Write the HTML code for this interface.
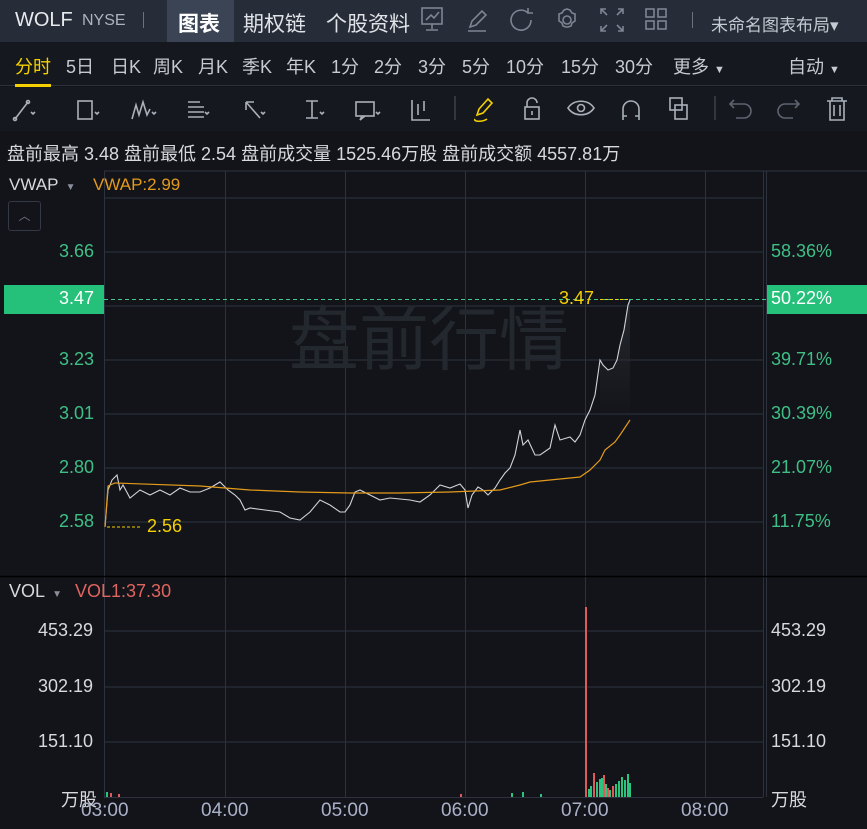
<!DOCTYPE html>
<html><head><meta charset="utf-8"><style>
*{margin:0;padding:0;box-sizing:border-box}
body{width:867px;height:829px;background:#121419;font-family:"Liberation Sans","Noto Sans CJK SC",sans-serif;overflow:hidden;position:relative;color:#d6d9de}
.a{position:absolute;white-space:nowrap}
#top{position:absolute;left:0;top:0;width:867px;height:42px;background:#262c38}
#row2{position:absolute;left:0;top:42px;width:867px;height:44px;background:#15181e;border-bottom:1px solid #2c313b}
#row3{position:absolute;left:0;top:87px;width:867px;height:44px;background:#15181e}
.t{font-size:18px;color:#c5cad3;top:53px}
</style></head><body>
<div id="top"></div>
<div class="a" style="left:15px;top:9px;font-size:20px;color:#e8eaee">WOLF</div>
<div class="a" style="left:82px;top:12px;font-size:16px;color:#aeb4be">NYSE</div>
<div class="a" style="left:143px;top:12px;width:1px;height:16px;background:#6b7280"></div>
<div class="a" style="left:167px;top:0;width:67px;height:42px;background:#3b4455"></div>
<div class="a" style="left:178px;top:8px;font-size:21px;font-weight:bold;color:#fff">图表</div>
<div class="a" style="left:243px;top:8px;font-size:21px;color:#e0e3e8">期权链</div>
<div class="a" style="left:326px;top:8px;font-size:21px;color:#e0e3e8">个股资料</div>
<svg class="a" style="left:0;top:0" width="700" height="42" fill="none" stroke="#7d8592" stroke-width="1.6">
<g transform="translate(421,7)"><rect x="1" y="1" width="20" height="16"/><path d="M11 17v5M5 23h12M5 13l5-5 3 3 5-6"/></g>
<g transform="translate(466,7)"><path d="M2 24h18M4 20l2-6 10-10 4 4-10 10z"/></g>
<g transform="translate(510,7)"><path d="M18 6a10 10 0 1 0 3 7M18 1v5h5"/></g>
<g transform="translate(555,7)"><circle cx="12" cy="13" r="4"/><path d="M12 2l3 1 2 3 3 1v7l-3 2-1 3-3 1h-2l-3-1-1-3-3-2V7l3-1 2-3z"/></g>
<g transform="translate(600,7)"><path d="M6 2H1v5M1 2l6 6M18 2h5v5M23 2l-6 6M6 24H1v-5M1 24l6-6M18 24h5v-5M23 24l-6-6"/></g>
<g transform="translate(645,7)"><rect x="1" y="2" width="8" height="8"/><rect x="13" y="2" width="8" height="8"/><rect x="1" y="14" width="8" height="8"/><rect x="13" y="14" width="8" height="8"/></g>
</svg>
<div class="a" style="left:692px;top:12px;width:1px;height:16px;background:#6b7280"></div>
<div class="a" style="left:711px;top:11px;font-size:17px;color:#c5cad3">未命名图表布局▾</div>

<div id="row2"></div>
<div class="a t" style="left:15px;color:#f5d000">分时</div>
<div class="a" style="left:15px;top:84px;width:36px;height:3px;background:#f5d000"></div>
<div class="a t" style="left:66px">5日</div>
<div class="a t" style="left:111px">日K</div>
<div class="a t" style="left:153px">周K</div>
<div class="a t" style="left:198px">月K</div>
<div class="a t" style="left:242px">季K</div>
<div class="a t" style="left:286px">年K</div>
<div class="a t" style="left:331px">1分</div>
<div class="a t" style="left:374px">2分</div>
<div class="a t" style="left:418px">3分</div>
<div class="a t" style="left:462px">5分</div>
<div class="a t" style="left:506px">10分</div>
<div class="a t" style="left:561px">15分</div>
<div class="a t" style="left:615px">30分</div>
<div class="a t" style="left:673px">更多 <span style="font-size:11px">▼</span></div>
<div class="a t" style="left:788px">自动 <span style="font-size:11px">▼</span></div>

<div id="row3"></div>
<svg class="a" style="left:0;top:87px" width="867" height="44" fill="none" stroke="#aab0ba" stroke-width="1.6">
<g transform="translate(12,8)"><path d="M3 24l13-17"/><circle cx="3" cy="24" r="1.5"/><circle cx="16" cy="7" r="1.5"/><path d="M19 17l2 2 2-2"/></g>
<g transform="translate(75,8)"><rect x="3" y="6" width="14" height="18"/><path d="M20 17l2 2 2-2"/></g>
<g transform="translate(130,8)"><path d="M2 24l4-14 3 10 4-13 4 13 3-6"/><path d="M22 17l2 2 2-2"/></g>
<g transform="translate(186,8)"><path d="M2 7h12M2 12h16M2 17h16M2 22h16"/><path d="M19 17l2 2 2-2"/></g>
<g transform="translate(243,8)"><path d="M3 7l14 16M3 7v8M3 7h8"/><path d="M18 17l2 2 2-2"/></g>
<g transform="translate(304,8)"><path d="M2 6h12M8 6v17M2 23h12"/><path d="M16 17l2 2 2-2"/></g>
<g transform="translate(354,8)"><rect x="2" y="7" width="18" height="14"/><path d="M8 21l-2 4 5-4"/><path d="M22 17l2 2 2-2"/></g>
<g transform="translate(410,8)"><path d="M2 5v20h18M8 9v11M14 6v10"/></g>
<path d="M455 96v24" stroke="#3a3f49" transform="translate(0,-87)"/>
<g transform="translate(473,8)" stroke="#f5d000"><path d="M2 24c-2 3 8 3 12 0M4 20l2-6 9-10 4 4-9 10z"/></g>
<g transform="translate(522,8)"><rect x="3" y="12" width="14" height="12"/><path d="M5 12v-4a5 5 0 0 1 10 0M10 16v4"/></g>
<g transform="translate(567,8)"><path d="M1 13c6-9 20-9 26 0-6 9-20 9-26 0z"/><circle cx="14" cy="13" r="3.5"/></g>
<g transform="translate(620,8)"><path d="M3 25v-11a8 8 0 0 1 16 0v11M3 21h4M15 21h4"/></g>
<g transform="translate(667,8)"><rect x="3" y="3" width="12" height="12"/><rect x="8" y="10" width="12" height="14"/></g>
<path d="M715 9v24" stroke="#3a3f49"/>
<g transform="translate(728,8)" stroke="#5d6470"><path d="M6 5l-4 4 4 4M2 9h14a7 7 0 0 1 0 14H8"/></g>
<g transform="translate(777,8)" stroke="#5d6470"><path d="M18 5l4 4-4 4M22 9H8a7 7 0 0 0 0 14h8"/></g>
<g transform="translate(825,8)"><path d="M2 6h20M7 6V3h10v3M5 6v19h14V6M9 10v11M15 10v11"/></g>
</svg>

<div class="a" style="left:0;top:131px;width:867px;height:40px;background:#121419"></div>
<div class="a" style="left:7px;top:140px;font-size:18px;color:#d6d9de">盘前最高 3.48 盘前最低 2.54 盘前成交量 1525.46万股 盘前成交额 4557.81万</div>

<svg class="a" style="left:0;top:0" width="867" height="829">
<defs><linearGradient id="gr" x1="0" y1="0" x2="0" y2="1"><stop offset="0" stop-color="#2a2d34" stop-opacity="0.8"/><stop offset="1" stop-color="#2a2d34" stop-opacity="0"/></linearGradient></defs>
<g stroke="#2d333e" stroke-width="1">
<path d="M104 171H867M104 198H763M104 252H763M104 306H763M104 360H763M104 414H763M104 468H763M104 522H763"/>
<path d="M104.5 171V797M225.5 171V797M345.5 171V797M465.5 171V797M585.5 171V797M705.5 171V797M763.5 171V797M766.5 171V797"/>
<path d="M104 631H763M104 687H763M104 742H763M104 797.5H763"/>
</g>
<path d="M0 576.5H867" stroke="#000" stroke-width="1.5"/>
<text x="289" y="364" font-size="70" fill="#23272e" font-family="Noto Sans CJK SC">盘前行情</text>
<path d="M104 299.5H867" stroke="#3fc98a" stroke-width="1" stroke-dasharray="4 3"/>
<rect x="4" y="285" width="100" height="29" fill="#25c07a"/>
<rect x="767" y="285" width="100" height="29" fill="#25c07a"/>
<path d="M600 360 L603 365 608 370 613 368 617 360 620 345 624 330 628 305 630 300 L630 420 L600 420Z" fill="url(#gr)"/>
<polyline fill="none" stroke="#d0d3d8" stroke-width="1.1" points="105,527 108,490 112,480 117,475 120,490 123,485 130,498 140,490 150,495 160,490 170,495 180,488 190,492 200,492 210,488 220,482 228,490 235,495 240,500 245,510 250,508 265,510 280,512 290,518 300,520 310,512 320,500 330,505 340,512 345,512 350,505 355,492 360,490 370,495 380,500 390,498 400,499 410,500 420,502 430,495 440,485 450,488 460,484 465,490 468,508 472,495 478,487 483,490 488,495 495,488 500,480 505,473 510,468 515,455 520,430 523,445 528,440 535,455 540,455 550,448 555,425 560,440 570,437 575,442 580,435 585,420 590,410 595,395 600,360 603,365 608,370 613,368 617,360 620,345 624,330 628,305 630,300"/>
<polyline fill="none" stroke="#e39a1c" stroke-width="1.2" points="105,527 108,486 115,483 200,486 250,490 300,492 350,493 400,493 450,492 500,490 520,485 530,482 550,480 580,477 590,470 600,460 605,450 615,442 620,435 630,420"/>
<path d="M107 527h33" stroke="#f5d000" stroke-dasharray="3 2"/>
<path d="M600 299.5h28" stroke="#f5d000" stroke-dasharray="3 2"/>
<g fill="#e05a5a"><rect x="585" y="607" width="2" height="190"/><rect x="593" y="773" width="2" height="24"/><rect x="603" y="775" width="2" height="22"/><rect x="607" y="788" width="2" height="9"/><rect x="612" y="786" width="2" height="11"/><rect x="110" y="793" width="2" height="4"/><rect x="118" y="794" width="2" height="3"/><rect x="460" y="794" width="2" height="3"/></g>
<g fill="#2bc47e"><rect x="588" y="789" width="2" height="8"/><rect x="590" y="786" width="2" height="11"/><rect x="596" y="782" width="2" height="15"/><rect x="599" y="779" width="2" height="18"/><rect x="601" y="778" width="2" height="19"/><rect x="605" y="784" width="2" height="13"/><rect x="609" y="790" width="2" height="7"/><rect x="615" y="784" width="2" height="13"/><rect x="618" y="781" width="2" height="16"/><rect x="621" y="777" width="2" height="20"/><rect x="624" y="780" width="2" height="17"/><rect x="627" y="774" width="2" height="23"/><rect x="629" y="783" width="2" height="14"/><rect x="106" y="792" width="2" height="5"/><rect x="511" y="793" width="2" height="4"/><rect x="522" y="792" width="2" height="5"/><rect x="540" y="794" width="2" height="3"/></g>
</svg>

<div class="a" style="left:9px;top:175px;font-size:17px;color:#d6d9de">VWAP <span style="font-size:10px;color:#8a909b">&nbsp;▼</span></div>
<div class="a" style="left:93px;top:175px;font-size:17px;color:#e39a1c">VWAP:2.99</div>
<div class="a" style="left:8px;top:201px;width:33px;height:30px;border:1px solid #333945;border-radius:3px;color:#6b7280;font-size:12px;text-align:center;line-height:28px">︿</div>
<div class="a" style="left:59px;top:241px;font-size:18px;color:#3fbf86">3.66</div>
<div class="a" style="left:59px;top:288px;font-size:18px;color:#fff">3.47</div>
<div class="a" style="left:59px;top:349px;font-size:18px;color:#3fbf86">3.23</div>
<div class="a" style="left:59px;top:403px;font-size:18px;color:#3fbf86">3.01</div>
<div class="a" style="left:59px;top:457px;font-size:18px;color:#3fbf86">2.80</div>
<div class="a" style="left:59px;top:511px;font-size:18px;color:#3fbf86">2.58</div>
<div class="a" style="left:147px;top:516px;font-size:18px;color:#f5d000">2.56</div>
<div class="a" style="left:559px;top:288px;font-size:18px;color:#f5d000">3.47</div>
<div class="a" style="left:771px;top:241px;font-size:18px;color:#3fbf86">58.36%</div>
<div class="a" style="left:771px;top:288px;font-size:18px;color:#fff">50.22%</div>
<div class="a" style="left:771px;top:349px;font-size:18px;color:#3fbf86">39.71%</div>
<div class="a" style="left:771px;top:403px;font-size:18px;color:#3fbf86">30.39%</div>
<div class="a" style="left:771px;top:457px;font-size:18px;color:#3fbf86">21.07%</div>
<div class="a" style="left:771px;top:511px;font-size:18px;color:#3fbf86">11.75%</div>

<div class="a" style="left:9px;top:581px;font-size:18px;color:#d6d9de">VOL <span style="font-size:10px;color:#8a909b">&nbsp;▼</span></div>
<div class="a" style="left:75px;top:581px;font-size:18px;color:#e0645f">VOL1:37.30</div>
<div class="a" style="left:38px;top:620px;font-size:18px;color:#d6d9de">453.29</div>
<div class="a" style="left:38px;top:676px;font-size:18px;color:#d6d9de">302.19</div>
<div class="a" style="left:38px;top:731px;font-size:18px;color:#d6d9de">151.10</div>
<div class="a" style="left:61px;top:786px;font-size:18px;color:#d6d9de">万股</div>
<div class="a" style="left:771px;top:620px;font-size:18px;color:#d6d9de">453.29</div>
<div class="a" style="left:771px;top:676px;font-size:18px;color:#d6d9de">302.19</div>
<div class="a" style="left:771px;top:731px;font-size:18px;color:#d6d9de">151.10</div>
<div class="a" style="left:771px;top:786px;font-size:18px;color:#d6d9de">万股</div>
<div class="a" style="left:81px;top:800px;font-size:19px;color:#a9b0c8">03:00</div>
<div class="a" style="left:201px;top:800px;font-size:19px;color:#a9b0c8">04:00</div>
<div class="a" style="left:321px;top:800px;font-size:19px;color:#a9b0c8">05:00</div>
<div class="a" style="left:441px;top:800px;font-size:19px;color:#a9b0c8">06:00</div>
<div class="a" style="left:561px;top:800px;font-size:19px;color:#a9b0c8">07:00</div>
<div class="a" style="left:681px;top:800px;font-size:19px;color:#a9b0c8">08:00</div>
</body></html>
